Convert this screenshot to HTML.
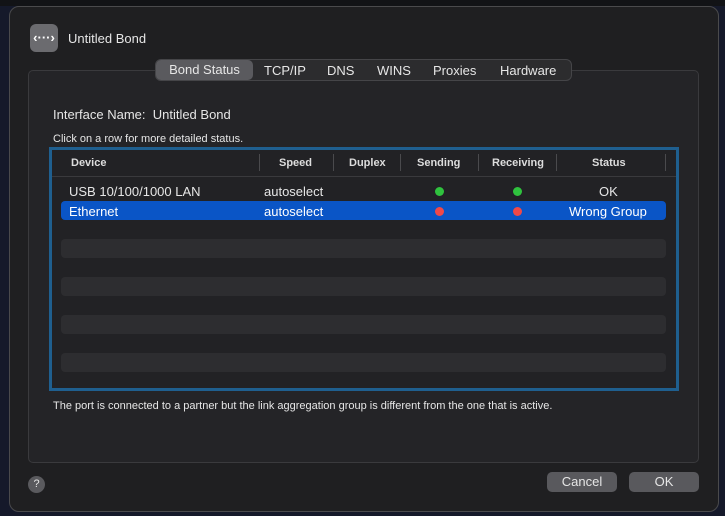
<!DOCTYPE html>
<html><head><style>
*{margin:0;padding:0;box-sizing:border-box}
body{width:725px;height:516px;background:#15192a;font-family:"Liberation Sans",sans-serif;color:#e6e6e6;position:relative;overflow:hidden}
.abs{position:absolute}
.win{left:9px;top:6px;width:710px;height:506px;background:#1f1f21;border:1px solid #4a4a4c;border-radius:10px}
.grp{left:28px;top:70px;width:671px;height:393px;background:#242427;border:1px solid #3a3a3d;border-radius:5px}
.tabs{left:155px;top:59px;width:417px;height:22px;background:#2c2c2e;border:1px solid #454548;border-radius:6px;font-size:13px}
.tabs span{position:absolute;top:3px}
.sel{background:#5a5a5e;border-radius:5px;height:20px;line-height:20px;left:0;top:0!important;width:97px;text-align:center}
.t{font-size:13px;white-space:nowrap}
.tbl{left:49px;top:147px;width:630px;height:244px;border:3px solid #1f5f8f;background:#222225}
.hd{font-size:11px;font-weight:bold;top:157px;color:#ddd}
.div{width:1px;height:17px;background:#4a4a4d;top:154px}
.row{left:61px;width:605px;height:19px;background:#2d2d30;border-radius:4px}
.dot{width:9px;height:9px;border-radius:50%}
.btn{height:20px;background:#59595d;border-radius:5px;font-size:13px;text-align:center;line-height:20px}
</style></head><body>
<div class="abs" style="left:0;top:0;width:725px;height:6px;background:#121316"></div>
<div class="abs win"></div>
<div class="abs" style="left:30px;top:24px;width:28px;height:28px;background:#6b6b6f;border-radius:6px;color:#fff;font-size:13px;font-weight:bold;text-align:center;line-height:27px">‹···›</div>
<div class="abs t" style="left:68px;top:31px">Untitled Bond</div>
<div class="abs grp"></div>
<div class="abs tabs"><span class="sel">Bond Status</span><span style="left:108px">TCP/IP</span><span style="left:171px">DNS</span><span style="left:221px">WINS</span><span style="left:277px">Proxies</span><span style="left:344px">Hardware</span></div>
<div class="abs t" style="left:53px;top:107px">Interface Name:&nbsp; Untitled Bond</div>
<div class="abs" style="left:53px;top:133px;font-size:11px">Click on a row for more detailed status.</div>
<div class="abs tbl"></div>
<div class="abs" style="left:52px;top:176px;width:624px;height:1px;background:#3a3a3d"></div>
<div class="abs hd" style="left:71px">Device</div>
<div class="abs hd" style="left:279px">Speed</div>
<div class="abs hd" style="left:349px">Duplex</div>
<div class="abs hd" style="left:417px">Sending</div>
<div class="abs hd" style="left:492px">Receiving</div>
<div class="abs hd" style="left:592px">Status</div>
<div class="abs div" style="left:259px"></div><div class="abs div" style="left:333px"></div><div class="abs div" style="left:400px"></div><div class="abs div" style="left:478px"></div><div class="abs div" style="left:556px"></div><div class="abs div" style="left:665px"></div>
<div class="abs t" style="left:69px;top:184px">USB 10/100/1000 LAN</div>
<div class="abs t" style="left:264px;top:184px">autoselect</div>
<div class="abs dot" style="left:435px;top:187px;background:#2fc23e"></div>
<div class="abs dot" style="left:513px;top:187px;background:#2fc23e"></div>
<div class="abs t" style="left:599px;top:184px">OK</div>
<div class="abs row" style="top:201px;background:#0a55c6"></div>
<div class="abs t" style="left:69px;top:204px;color:#fff">Ethernet</div>
<div class="abs t" style="left:264px;top:204px;color:#fff">autoselect</div>
<div class="abs dot" style="left:435px;top:207px;background:#f04848"></div>
<div class="abs dot" style="left:513px;top:207px;background:#f04848"></div>
<div class="abs t" style="left:569px;top:204px;color:#fff">Wrong Group</div>
<div class="abs row" style="top:239px"></div>
<div class="abs row" style="top:277px"></div>
<div class="abs row" style="top:315px"></div>
<div class="abs row" style="top:353px"></div>
<div class="abs" style="left:53px;top:400px;font-size:11px">The port is connected to a partner but the link aggregation group is different from the one that is active.</div>
<div class="abs" style="left:28px;top:476px;width:17px;height:17px;border-radius:50%;background:#5a5a5e;font-size:11px;text-align:center;line-height:17px">?</div>
<div class="abs btn" style="left:547px;top:472px;width:70px">Cancel</div>
<div class="abs btn" style="left:629px;top:472px;width:70px">OK</div>
</body></html>
